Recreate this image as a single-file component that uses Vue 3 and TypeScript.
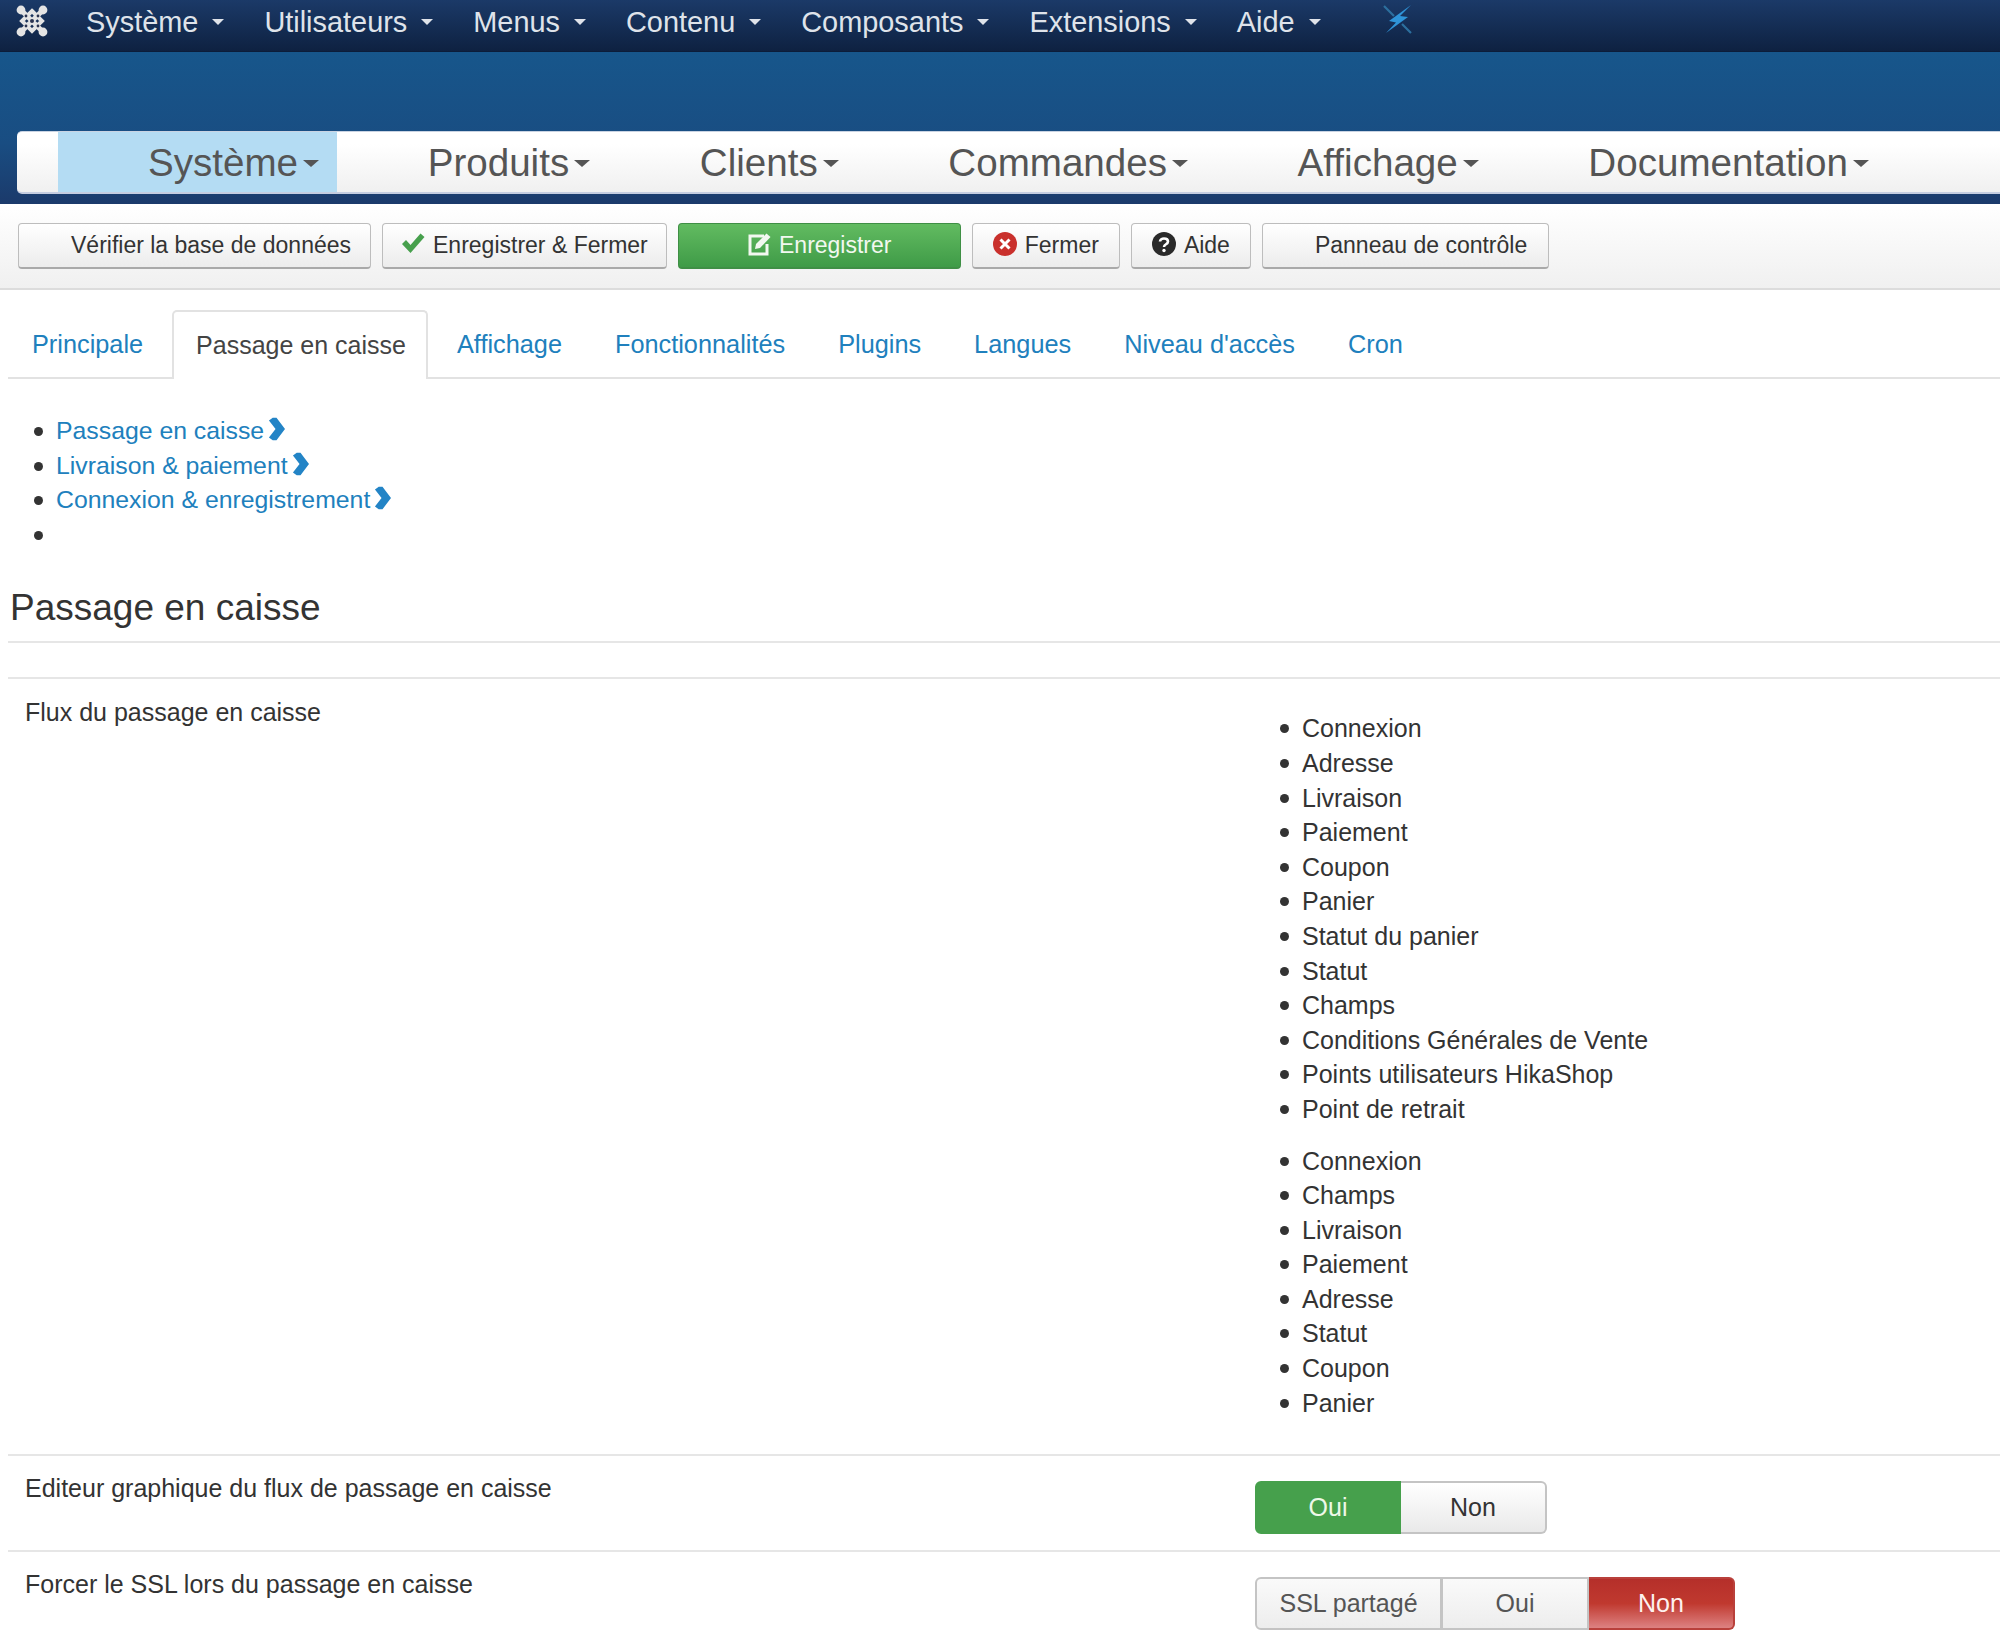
<script setup lang="ts">
const topMenu: string[] = ['Système', 'Utilisateurs', 'Menus', 'Contenu', 'Composants', 'Extensions', 'Aide']
const mainMenu: string[] = ['Système', 'Produits', 'Clients', 'Commandes', 'Affichage', 'Documentation']
const tabs: string[] = ['Principale', 'Passage en caisse', 'Affichage', 'Fonctionnalités', 'Plugins', 'Langues', "Niveau d'accès", 'Cron']
const anchors: string[] = ['Passage en caisse', 'Livraison & paiement', 'Connexion & enregistrement']
const flowA: string[] = ['Connexion', 'Adresse', 'Livraison', 'Paiement', 'Coupon', 'Panier', 'Statut du panier', 'Statut', 'Champs', 'Conditions Générales de Vente', 'Points utilisateurs HikaShop', 'Point de retrait']
const flowB: string[] = ['Connexion', 'Champs', 'Livraison', 'Paiement', 'Adresse', 'Statut', 'Coupon', 'Panier']
</script>

<template>
  <div class="page">
    <header class="topbar">
      <svg class="joomla" viewBox="0 0 32 32" width="32" height="32" aria-hidden="true">
        <g stroke="#e4e4e4" fill="none" stroke-width="5" stroke-linecap="round">
          <path d="M5 5 L27 27 M27 5 L5 27" />
          <path d="M16 6 L26 16 L16 26 L6 16 Z" stroke-width="4" />
        </g>
        <g fill="#e4e4e4">
          <circle cx="5" cy="5" r="4.4" /><circle cx="27" cy="5" r="4.4" /><circle cx="5" cy="27" r="4.4" /><circle cx="27" cy="27" r="4.4" />
        </g>
        <g fill="#2a3350">
          <circle cx="16" cy="16" r="2" /><circle cx="10" cy="11" r="1.4" /><circle cx="22" cy="11" r="1.4" /><circle cx="10" cy="21" r="1.4" /><circle cx="22" cy="21" r="1.4" />
        </g>
      </svg>
      <nav class="topmenu">
        <span v-for="item in topMenu" :key="item" class="topitem">{{ item }}<i class="caret light"></i></span>
      </nav>
      <svg class="bolt" viewBox="0 0 30 30" width="30" height="30" aria-hidden="true">
        <path d="M1 2 L11 12 M19 20 L28 29" stroke="#2c6f9e" stroke-width="2.2" />
        <path d="M28 1 L6 17 L13 18.5 L3 29 L25 13 L17 12 Z" fill="#2f94d8" />
      </svg>
    </header>

    <section class="banner">
      <nav class="mainmenu">
        <span v-for="(item, i) in mainMenu" :key="item" class="mainitem" :class="{ active: i === 0 }">{{ item }}<i class="caret big"></i></span>
      </nav>
    </section>

    <section class="toolbar">
      <button class="btn wide">Vérifier la base de données</button>
      <button class="btn slim">
        <svg class="ico" viewBox="0 0 24 24" width="24" height="24" aria-hidden="true"><path d="M1 12 L5 8 L9.5 13 L19.5 1.5 L23.5 5 L9.5 21 Z" fill="#47a04d" /></svg>
        Enregistrer &amp; Fermer
      </button>
      <button class="btn success">
        <svg class="ico" viewBox="0 0 24 24" width="24" height="24" aria-hidden="true">
          <path d="M17 4 H3 V22 H20 V12" fill="none" stroke="#f2f8f0" stroke-width="3" />
          <path d="M9 12 L19.5 1.5 L23.5 5 L13 16 L8 17 Z" fill="#f2f8f0" />
        </svg>
        Enregistrer
      </button>
      <button class="btn">
        <svg class="ico" viewBox="0 0 24 24" width="24" height="24" aria-hidden="true">
          <circle cx="12" cy="12" r="12" fill="#c9302c" />
          <path d="M7.5 7.5 L16.5 16.5 M16.5 7.5 L7.5 16.5" stroke="#fff" stroke-width="3" />
        </svg>
        Fermer
      </button>
      <button class="btn">
        <svg class="ico" viewBox="0 0 24 24" width="24" height="24" aria-hidden="true">
          <circle cx="12" cy="12" r="12" fill="#2a2a2a" />
          <path d="M8 9.5 C8 5.5 16 5.5 16 9.5 C16 12.5 12 12 12 15" fill="none" stroke="#fff" stroke-width="2.6" />
          <circle cx="12" cy="18.5" r="1.7" fill="#fff" />
        </svg>
        Aide
      </button>
      <button class="btn wide last">Panneau de contrôle</button>
    </section>

    <main class="content">
      <ul class="tabs">
        <li v-for="(t, i) in tabs" :key="t" class="tab" :class="{ current: i === 1 }">{{ t }}</li>
      </ul>

      <ul class="anchors">
        <li v-for="a in anchors" :key="a">
          <a class="anchor">{{ a }}<svg class="chev" viewBox="0 0 18 24" width="17" height="24" aria-hidden="true"><path d="M1 3 L5 0 L9 0 L18 12 L9 24 L5 24 L1 21 L8 12 Z" fill="#2384c6" /></svg></a>
        </li>
        <li></li>
      </ul>

      <h2 class="title">Passage en caisse</h2>

      <div class="row first">
        <div class="label">Flux du passage en caisse</div>
        <div class="value">
          <ul class="flow"><li v-for="f in flowA" :key="f">{{ f }}</li></ul>
          <ul class="flow"><li v-for="f in flowB" :key="f + 'b'">{{ f }}</li></ul>
        </div>
      </div>

      <div class="row">
        <div class="label">Editeur graphique du flux de passage en caisse</div>
        <div class="value">
          <div class="group">
            <span class="seg on-green">Oui</span>
            <span class="seg">Non</span>
          </div>
        </div>
      </div>

      <div class="row">
        <div class="label">Forcer le SSL lors du passage en caisse</div>
        <div class="value">
          <div class="group">
            <span class="seg grey">SSL partagé</span>
            <span class="seg grey">Oui</span>
            <span class="seg on-red">Non</span>
          </div>
        </div>
      </div>
    </main>
  </div>
</template>

<style scoped>
.page {
  width: 2000px;
  height: 1639px;
  overflow: hidden;
  background: #fff;
  color: #333;
  font-family: "Liberation Sans", Arial, sans-serif;
  font-size: 25px;
}
.topbar {
  height: 51px;
  display: flex;
  align-items: center;
  background: linear-gradient(#1b3a68, #0e2141);
  border-bottom: 1px solid #0c1d3a;
  position: relative;
}
.joomla { margin: 0 0 9px 16px; flex: none; }
.topmenu { display: flex; margin-left: 38px; margin-bottom: 8px; }
.topitem {
  color: #dfe3ea;
  font-size: 28.9px;
  line-height: 40px;
  margin-right: 40px;
  display: flex;
  align-items: center;
  white-space: nowrap;
}
.bolt { margin: 0 0 14px 22px; flex: none; }
.caret {
  display: inline-block;
  width: 0;
  height: 0;
  border-left: 6px solid transparent;
  border-right: 6px solid transparent;
  border-top: 6px solid #dfe3ea;
  margin-left: 14px;
  flex: none;
}
.caret.big {
  border-left-width: 8px;
  border-right-width: 8px;
  border-top: 7px solid #555;
  margin-left: 5px;
}
.banner {
  height: 152px;
  box-sizing: border-box;
  padding: 79px 0 0 17px;
  background: linear-gradient(#17568b 0%, #194d82 60%, #1b3a6b 100%);
}
.mainmenu {
  height: 63px;
  box-sizing: border-box;
  display: flex;
  padding-left: 41px;
  background: linear-gradient(#ffffff 20%, #f0f0f0 100%);
  border-top: 1px solid #c9d3e2;
  border-bottom: 2px solid #c5cde0;
  border-radius: 5px 0 0 5px;
}
.mainitem {
  display: flex;
  align-items: center;
  font-size: 38.6px;
  color: #555;
  padding: 2px 19px 0 90.6px;
  white-space: nowrap;
}
.mainitem.active {
  background: #b4dcf3;
  padding: 2px 18px 0 90px;
}
.toolbar {
  height: 86px;
  box-sizing: border-box;
  display: flex;
  align-items: flex-start;
  gap: 11px;
  padding: 19px 0 0 18px;
  background: linear-gradient(#ffffff, #f0f0f0);
  border-bottom: 2px solid #dcdcdc;
}
.btn {
  height: 46px;
  box-sizing: border-box;
  display: flex;
  align-items: center;
  padding: 0 20px;
  font: inherit;
  font-size: 23px;
  color: #333;
  background: linear-gradient(#ffffff, #ececec);
  border: 1px solid #bdbdbd;
  border-bottom: 2px solid #a9a9a9;
  border-radius: 4px;
  white-space: nowrap;
}
.btn.slim { padding: 0 18px; }
.btn.wide { padding: 0 19px 0 52px; }
.btn.wide.last { padding-right: 21px; }
.ico { margin-right: 8px; margin-top: -3px; flex: none; }
.btn.success {
  width: 283px;
  justify-content: center;
  color: #f2f8f0;
  background: linear-gradient(#62bb61, #3f9b47);
  border-color: #3f8f45;
}
.content { padding-left: 8px; }
.tabs {
  list-style: none;
  margin: 20px 0 0;
  padding: 0;
  display: flex;
  border-bottom: 2px solid #e2e2e2;
  height: 67px;
}
.tab {
  height: 67px;
  box-sizing: border-box;
  padding: 0 24px;
  margin-right: 5px;
  line-height: 68px;
  font-size: 25.3px;
  color: #2080bd;
  white-space: nowrap;
}
.tab.current {
  height: 69px;
  font-size: 25px;
  background: #fff;
  color: #444;
  border: 2px solid #e2e2e2;
  border-bottom: 0;
  border-radius: 5px 5px 0 0;
  padding: 0 20px 0 22px;
  line-height: 66px;
}
.anchors {
  margin: 35px 0 0;
  padding: 0 0 0 48px;
  list-style: none;
  line-height: 34.6px;
  font-size: 24.8px;
}
.anchors li, .flow li { position: relative; height: 34.6px; }
.anchors li::before, .flow li::before {
  content: "";
  position: absolute;
  left: -22.5px;
  top: 13px;
  width: 9px;
  height: 9px;
  border-radius: 50%;
  background: #333;
}
.anchor { color: #2080bd; display: inline-flex; align-items: center; }
.chev { margin: -4px 0 0 4px; }
.title {
  margin: 31px 0 0;
  font-size: 37px;
  font-weight: 400;
  line-height: 50px;
  padding: 0 0 8px 2px;
  color: #333;
  border-bottom: 2px solid #e6e6e6;
}
.row {
  display: grid;
  grid-template-columns: 1230px 1fr;
  padding: 15px 0 16px 17px;
  border-top: 2px solid #e6e6e6;
}
.row.first { margin-top: 34px; padding: 16px 0 34px 17px; }
.label { line-height: 34.6px; color: #333; }
.value { min-width: 0; }
.flow {
  margin: 16px 0 0;
  padding: 0 0 0 47px;
  list-style: none;
  line-height: 34.6px;
}
.flow + .flow { margin-top: 17px; }
.group {
  display: inline-flex;
  margin-top: 10px;
  height: 53px;
}
.seg {
  width: 146px;
  box-sizing: border-box;
  display: flex;
  align-items: center;
  justify-content: center;
  color: #333;
  background: linear-gradient(#ffffff, #e9e9e9);
  border: 2px solid #c4c4c4;
  border-left-width: 0;
  white-space: nowrap;
}
.seg:first-child { border-left-width: 2px; border-radius: 6px 0 0 6px; }
.seg:last-child { border-radius: 0 6px 6px 0; }
.seg.grey { color: #555; background: linear-gradient(#fafafa, #ededed); }
.seg.grey:first-child { width: 188px; border-right-width: 3px; }
.seg.on-green {
  background: #46a04c;
  border-color: #46a04c;
  color: #eef8e8;
}
.seg.on-red {
  background: linear-gradient(#b52f2a 0%, #c0392f 50%, #dd8282 100%);
  border-color: #b9403b;
  color: #fdf1ef;
}
</style>
